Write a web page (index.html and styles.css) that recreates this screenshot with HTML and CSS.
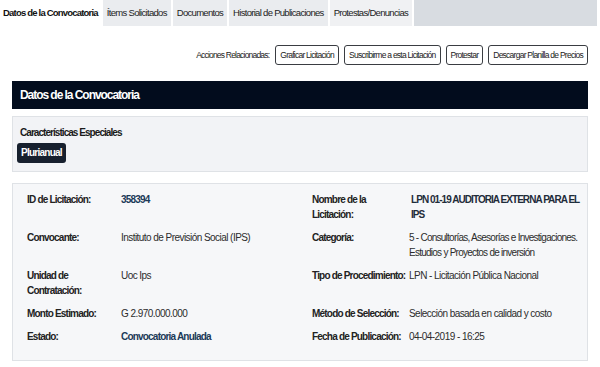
FILE: index.html
```html
<!DOCTYPE html>
<html lang="es">
<head>
<meta charset="utf-8">
<link rel="stylesheet" href="styles.css">
</head>
<body>
<div class="page">
  <nav class="tabs">
    <div class="tab active">Datos de la Convocatoria</div>
    <div class="tab">Ítems Solicitados</div>
    <div class="tab">Documentos</div>
    <div class="tab">Historial de Publicaciones</div>
    <div class="tab light">Protestas/Denuncias</div>
    <div class="tab-fill"></div>
  </nav>

  <div class="actions">
    <span class="actions-label">Acciones Relacionadas:</span>
    <button class="btn">Graficar Licitación</button>
    <button class="btn">Suscribirme a esta Licitación</button>
    <button class="btn">Protestar</button>
    <button class="btn">Descargar Planilla de Precios</button>
  </div>

  <div class="panel-head">Datos de la Convocatoria</div>

  <div class="special">
    <div class="special-title">Características Especiales</div>
    <span class="badge">Plurianual</span>
  </div>

  <div class="data">
    <div class="lbl">ID de Licitación:</div>
    <div class="val link">358394</div>
    <div class="lbl">Nombre de la<br>Licitación:</div>
    <div class="val strong">LPN 01-19 AUDITORIA EXTERNA PARA EL<br>IPS</div>

    <div class="lbl">Convocante:</div>
    <div class="val">Instituto de Previsión Social (IPS)</div>
    <div class="lbl">Categoría:</div>
    <div class="val">5 - Consultorías, Asesorías e Investigaciones.<br>Estudios y Proyectos de inversión</div>

    <div class="lbl">Unidad de<br>Contratación:</div>
    <div class="val">Uoc Ips</div>
    <div class="lbl">Tipo de Procedimiento:</div>
    <div class="val">LPN - Licitación Pública Nacional</div>

    <div class="lbl">Monto Estimado:</div>
    <div class="val">G 2.970.000.000</div>
    <div class="lbl">Método de Selección:</div>
    <div class="val">Selección basada en calidad y costo</div>

    <div class="lbl">Estado:</div>
    <div class="val link">Convocatoria Anulada</div>
    <div class="lbl">Fecha de Publicación:</div>
    <div class="val">04-04-2019 - 16:25</div>
  </div>
</div>
</body>
</html>
```

FILE: styles.css
```css
* { box-sizing: border-box; }
html, body { margin: 0; padding: 0; background: #ffffff; }
body {
  font-family: "Liberation Sans", Arial, sans-serif;
  font-size: 10px;
  letter-spacing: -0.55px;
  color: #2a2a2a;
  width: 600px;
  height: 367px;
  overflow: hidden;
}
.page { width: 600px; }

.tabs {
  display: flex;
  height: 26px;
  width: 597px;
}
.tab {
  height: 26px;
  line-height: 26px;
  padding: 0 4px;
  background: #eaecef;
  border-right: 2px solid #ffffff;
  color: #222;
  white-space: nowrap;
  font-size: 9.5px;
  letter-spacing: -0.7px;
}
.tab.active {
  background: #ffffff;
  font-weight: bold;
  letter-spacing: -0.8px;
  color: #111;
  padding: 0 3px;
}
.tab.light { background: #f0f1f3; }
.tab-fill { flex: 1; background: #d8dce1; }

.actions {
  display: flex;
  justify-content: flex-end;
  align-items: flex-end;
  gap: 5px;
  height: 39px;
  padding-right: 12px;
}
.actions-label {
  font-size: 8.5px;
  letter-spacing: -0.8px;
  line-height: 20px;
  color: #222;
  margin-right: 1px;
}
.btn {
  font-family: inherit;
  font-size: 8.5px;
  letter-spacing: -0.75px;
  color: #222;
  background: #ffffff;
  border: 1px solid #3a3d42;
  border-radius: 3px;
  height: 20px;
  padding: 0 4px;
  margin: 0;
}

.panel-head {
  margin: 16px 12px 0 12px;
  height: 28px;
  background: #020c1d;
  color: #ffffff;
  font-weight: bold;
  font-size: 12px;
  letter-spacing: -1.05px;
  line-height: 28px;
  padding-left: 8px;
}

.special {
  margin: 7px 12px 0 12px;
  height: 56px;
  background: #f2f3f6;
  border: 1px solid #dfe2e6;
  padding: 9px 0 0 4px;
}
.special-title {
  font-weight: bold;
  font-size: 10px;
  letter-spacing: -0.95px;
  line-height: 13px;
  color: #1a1a1a;
  height: 17px;
  padding-left: 3px;
}
.badge {
  display: inline-block;
  background: #17202e;
  color: #ffffff;
  font-weight: bold;
  font-size: 10px;
  letter-spacing: -0.75px;
  height: 20px;
  line-height: 20px;
  padding: 0 4px;
  border-radius: 3px;
}

.data {
  margin: 11px 12px 0 12px;
  height: 178px;
  background: #f6f7f9;
  border: 1px solid #dfe2e6;
  padding: 8px 0 0 14px;
  display: grid;
  grid-template-columns: 94px 191px 97px 178px;
  row-gap: 8px;
  align-content: start;
  line-height: 15px;
}
.lbl {
  font-weight: bold;
  letter-spacing: -0.8px;
  color: #222;
  white-space: nowrap;
}
.val { color: #2c2c2c; white-space: nowrap; }
.val.link { font-weight: bold; letter-spacing: -0.8px; color: #1b3a58; }
.val.strong { font-weight: bold; letter-spacing: -0.95px; color: #1f2c3a; padding-left: 2px; }
.data .val:nth-child(8) { letter-spacing: -0.75px; }
```
